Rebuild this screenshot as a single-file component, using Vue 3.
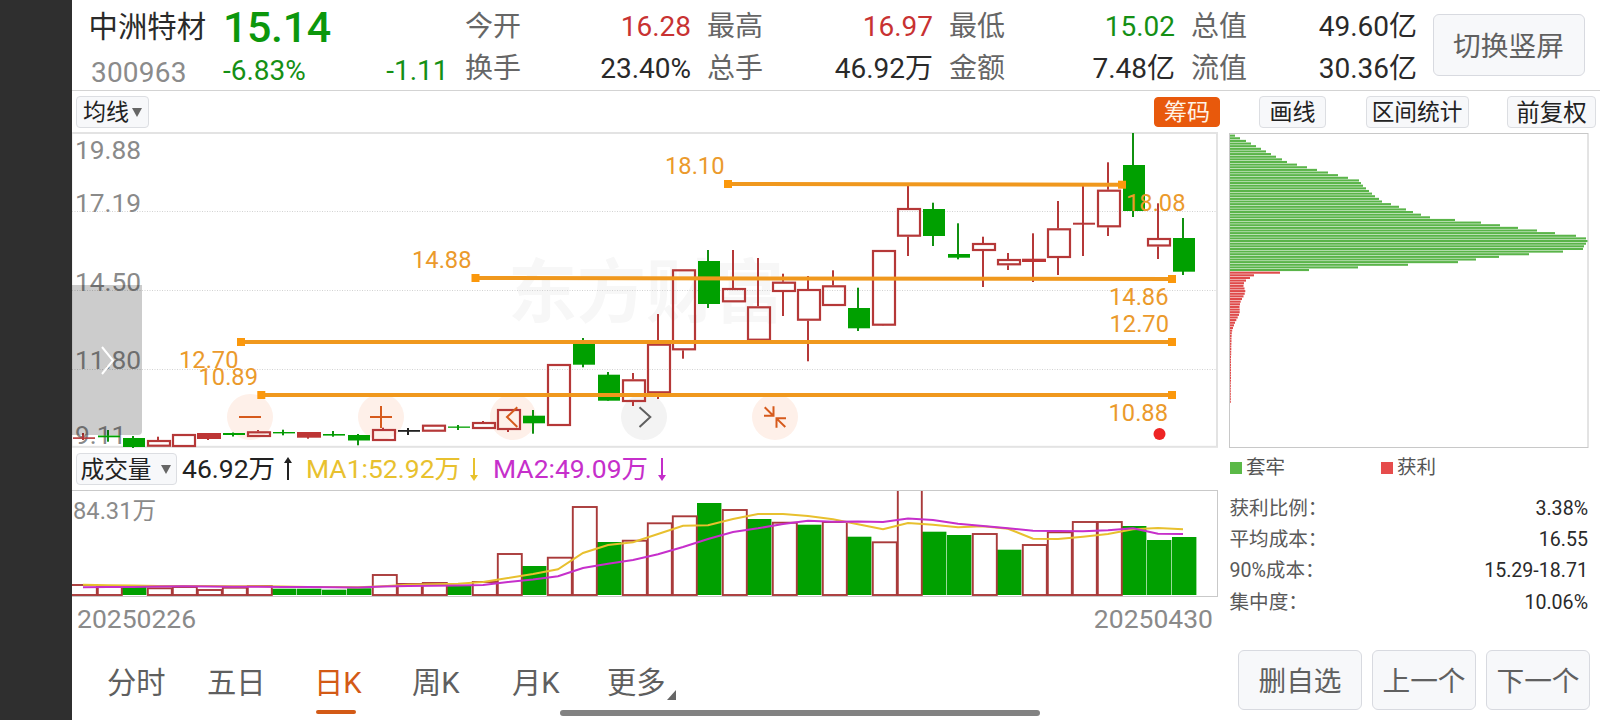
<script setup>
const quotes = [
  { label: '今开', value: '16.28', tone: 'up' },
  { label: '最高', value: '16.97', tone: 'up' },
  { label: '最低', value: '15.02', tone: 'down' },
  { label: '总值', value: '49.60亿', tone: '' },
  { label: '换手', value: '23.40%', tone: '' },
  { label: '总手', value: '46.92万', tone: '' },
  { label: '金额', value: '7.48亿', tone: '' },
  { label: '流值', value: '30.36亿', tone: '' },
]

// kind: h = hollow rise, s = solid red, t = thin red line, g = green, b = black
// [kind, body top, body bottom, high, low]
const candleRows = [
  ['t', 437.3, 438.9, 433, 440], ['g', 435.5, 437.3, 430, 441.7], ['g', 438, 447, 436, 448],
  ['h', 440, 446.7, 436.7, 446], ['h', 434, 447, 434, 446], ['s', 433, 439, 433, 440],
  ['g', 433, 435, 432.5, 436.5], ['h', 431.3, 437, 430, 437], ['g', 432, 433.4, 429.7, 435.3],
  ['s', 432, 437.7, 432, 438.7], ['g', 434, 435.6, 431, 436.7], ['g', 435, 440.5, 434, 445.3],
  ['h', 429, 441, 427.7, 441], ['b', 430, 431.8, 428, 435], ['h', 424.7, 431.7, 424.7, 431.7],
  ['g', 426.5, 427.8, 425, 430], ['h', 422, 429, 421, 429], ['h', 409, 430, 409, 432],
  ['g', 415.7, 423.3, 410, 433.7], ['h', 364, 426, 364, 426], ['g', 343, 364.7, 338, 367.3],
  ['g', 374.7, 400.7, 372, 400.7], ['h', 379.3, 402, 373, 406], ['h', 343.7, 393.3, 314, 399],
  ['h', 269.3, 350.3, 269.3, 358.7], ['g', 261, 304, 250, 308], ['h', 288, 302.3, 250, 302],
  ['h', 306.3, 340.7, 258, 340], ['h', 281.7, 292, 273.7, 316], ['h', 289, 320.7, 276, 361.3],
  ['h', 285.3, 306, 270.3, 306], ['g', 308, 328.3, 287.7, 331], ['h', 250, 325.7, 250, 326],
  ['h', 208, 236.7, 185, 256], ['g', 209, 236, 202.7, 246], ['g', 254, 257.7, 223.3, 259.3],
  ['h', 243, 251, 236.7, 287], ['h', 259, 265.3, 253, 270], ['s', 258.7, 262, 233.3, 282],
  ['h', 228.3, 258, 201, 275], ['t', 222.7, 224.7, 185, 256], ['h', 189.7, 227.3, 162.3, 236],
  ['g', 165, 211, 133, 217], ['h', 238, 246.5, 203.3, 259], ['g', 238, 271.7, 218, 275],
]
const candles = candleRows.map(([kind, top, bottom, high, low], i) => ({
  kind, top, bottom, high, low, x: 83 + i * 25,
}))

const volumeTops = [
  584, 585.5, 587, 587.3, 586, 589, 586.7, 585, 588.7, 588.7, 589.7, 588.3, 574, 583, 582,
  586, 581, 553, 566, 556.7, 506, 542, 539.7, 522.3, 515.3, 503, 509, 519, 521.7, 524.7,
  521, 536.7, 541.3, 470, 531.7, 535, 533, 549.7, 544, 531.3, 521, 521, 526, 540, 537,
]
const greenVolumes = new Set([2, 8, 9, 10, 11, 15, 18, 21, 25, 27, 29, 31, 34, 35, 37, 42, 43, 44])
const volumes = volumeTops.map((top, i) => ({ top, x: 83 + i * 25, green: greenVolumes.has(i) }))

const toPoints = (ys) => ys.map((y, i) => `${83 + i * 25},${y}`).join(' ')
const ma1 = toPoints([
  584.7, 585.3, 585.6, 586, 586, 586, 586.2, 586.3, 586.5, 587, 587, 587.3, 586.2, 584.7, 584.3,
  583.7, 582, 578, 574, 569.3, 553, 545, 542.3, 534, 525.7, 525.3, 519, 514, 514, 516,
  519.3, 524.3, 529.3, 523, 524.7, 527.3, 526.3, 528.7, 538.7, 539, 536.7, 534, 529.3, 528, 529.3,
])
const ma2 = toPoints([
  587.3, 587, 587, 586.5, 586.3, 586.5, 586.7, 586.7, 587, 587, 587.3, 587.5, 586.5, 586, 585.8,
  585.6, 585, 582, 579.5, 576.3, 568, 563.7, 560, 554.3, 547, 539, 532, 528.3, 524, 520.7,
  521.7, 521.5, 522, 518.5, 520, 523.7, 526, 528.3, 530.7, 531, 531.3, 530.3, 528.3, 533.7, 534,
])

const trapped = [
  5, 10, 16, 21, 26, 31, 36, 41, 46, 52, 57, 67, 77, 87, 98, 108, 118, 129, 131, 133, 136, 139,
  142, 145, 149, 152, 161, 169, 176, 183, 191, 200, 225, 251, 270, 288, 307, 325, 346, 356, 357.5,
  356, 354, 353, 333, 299, 269, 246, 228, 178, 128, 79,
]
const profitable = [
  50, 24, 20, 16, 14, 13.5, 14.5, 15.3, 14.7, 13.5, 12, 10.7, 10, 9.5, 9.7, 9.7, 9, 7.7, 6.3, 5,
  4, 3, 2.2, 1.8, 1.6, 1.5, 1.5, 1.4, 1.3, 1.3, 1.2, 1.2, 1, 1, 1, 1, 1, 1, 1, 1, 1, 1, 0.8,
  0.8, 0.8, 0.8, 0.8, 0.8, 0.8, 0.8,
]
const chips = [...trapped, ...profitable].map((w, i) => ({
  w, y: 134.6 + i * 2.635, color: i < trapped.length ? '#5ab449' : '#df4a4a',
}))

const trendLines = [
  { x1: 728, y1: 184, x2: 1122, y2: 184.7 },
  { x1: 475.5, y1: 278, x2: 1172, y2: 279 },
  { x1: 241, y1: 342, x2: 1172, y2: 342 },
  { x1: 261.3, y1: 395, x2: 1172, y2: 395 },
]
const trendLabels = [
  { x: 665, y: 174, t: '18.10' }, { x: 1126, y: 211, t: '18.08' },
  { x: 412, y: 268, t: '14.88' }, { x: 1109, y: 305, t: '14.86' },
  { x: 179, y: 368, t: '12.70' }, { x: 1109.5, y: 332, t: '12.70' },
  { x: 198.5, y: 385, t: '10.89' }, { x: 1108.5, y: 421, t: '10.88' },
]
const priceScale = [
  { y: 159, t: '19.88' }, { y: 212, t: '17.19' }, { y: 291, t: '14.50' },
  { y: 369, t: '11.80' }, { y: 443.7, t: '9.11' },
]
const stats = [
  ['获利比例：', '3.38%'],
  ['平均成本：', '16.55'],
  ['90%成本：', '15.29-18.71'],
  ['集中度：', '10.06%'],
]
const tabs = ['分时', '五日', '日K', '周K', '月K', '更多']
</script>

<template>
  <div class="screen">
    <aside class="notch"></aside>
    <div class="app">
      <header class="header">
        <div class="stock">
          <span class="name">中洲特材</span>
          <span class="code">300963</span>
        </div>
        <div class="price">
          <strong>15.14</strong>
          <div class="change"><span>-6.83%</span><span>-1.11</span></div>
        </div>
        <dl class="quotes">
          <div v-for="q in quotes" :key="q.label" class="quote">
            <dt>{{ q.label }}</dt>
            <dd :class="q.tone">{{ q.value }}</dd>
          </div>
        </dl>
        <button class="btn rotate">切换竖屏</button>
      </header>

      <div class="toolbar">
        <button class="chip ma">均线<i class="caret"></i></button>
        <button class="chip active">筹码</button>
        <button class="chip draw">画线</button>
        <button class="chip range">区间统计</button>
        <button class="chip adjust">前复权</button>
      </div>

      <div class="body">
        <section class="left">
          <svg class="kline" width="1147" height="316" viewBox="72 132 1147 316">
            <rect x="71.5" y="133" width="1145.5" height="313.8" fill="#fff" stroke="#e3e3e3" stroke-width="2" />
            <text class="watermark" x="508" y="317">东方财富</text>
            <g stroke="#d2d2d2" stroke-width="1" stroke-dasharray="1 1.5">
              <line x1="72" x2="1217" y1="211.5" y2="211.5" />
              <line x1="72" x2="1217" y1="290.5" y2="290.5" />
              <line x1="72" x2="1217" y1="369.5" y2="369.5" />
            </g>
            <circle v-for="x in [250, 381, 513, 775]" :key="x" :cx="x" cy="417" r="23" fill="#fef0e9" />
            <circle cx="644" cy="417" r="23" fill="#f3f3f3" />
            <text v-for="p in priceScale" :key="p.t" class="scale" x="75" :y="p.y">{{ p.t }}</text>
            <g v-for="c in candles" :key="c.x">
              <template v-if="c.kind === 'h'">
                <rect :x="c.x - 1" :y="c.high" width="2" :height="c.top - c.high" fill="#b53838" />
                <rect :x="c.x - 1" :y="c.bottom" width="2" :height="Math.max(0, c.low - c.bottom)" fill="#b53838" />
                <rect :x="c.x - 10" :y="c.top + 1" width="22" :height="c.bottom - c.top - 2" fill="none" stroke="#b53838" stroke-width="2.2" />
              </template>
              <template v-else-if="c.kind === 's'">
                <rect :x="c.x - 1" :y="c.high" width="2" :height="c.low - c.high" fill="#b53838" />
                <rect :x="c.x - 11" :y="c.top" width="24" :height="c.bottom - c.top" fill="#bd3535" />
              </template>
              <template v-else>
                <rect
                  :x="c.x - 1" :y="c.high" width="2" :height="c.low - c.high"
                  :fill="c.kind === 'g' ? '#109010' : c.kind === 'b' ? '#222' : '#b53838'"
                />
                <rect
                  :x="c.x - 10" :y="c.top" width="22" :height="c.bottom - c.top"
                  :fill="c.kind === 'g' ? '#00a000' : c.kind === 'b' ? '#222' : '#b53838'"
                />
              </template>
            </g>
            <g fill="none" stroke="#d65a1c" stroke-width="2">
              <path d="M239 417h22M370 417h22M381 406v22M517.3 407.3L507 417l10.3 10" />
              <path d="M764.7 407.3l8.6 8.4M773.5 406.3v9.4h-9.5M785.3 427l-8.6-8.4M776.5 427.7v-9.4h9.5" />
              <path d="M639.5 407.3l10.8 9.7-10.8 10" stroke="#5f5f5f" />
            </g>
            <g v-for="(l, i) in trendLines" :key="i">
              <line :x1="l.x1" :y1="l.y1" :x2="l.x2" :y2="l.y2" stroke="#f0981d" stroke-width="4" />
              <rect :x="l.x1 - 4" :y="l.y1 - 4" width="8" height="8" fill="#fb980c" />
              <rect :x="l.x2 - 4" :y="l.y2 - 4" width="8" height="8" fill="#fb980c" />
            </g>
            <text v-for="(l, i) in trendLabels" :key="i" class="trend" :x="l.x" :y="l.y">{{ l.t }}</text>
            <circle cx="1159.5" cy="434" r="6" fill="#ee2424" />
            <path d="M72 285h70v146a4 4 0 0 1-4 4H72z" fill="#000" fill-opacity=".2" />
            <path d="M102 347l11 13.5L102 374" fill="none" stroke="#fff" stroke-width="2" />
          </svg>

          <div class="indicator">
            <button class="chip vol">成交量<i class="caret"></i></button>
            <span class="v0">46.92万</span>
            <svg width="10" height="24" viewBox="0 0 10 24"><path d="M5 23V3" stroke="#222" stroke-width="2" /><path d="M5 0l4 6H1z" fill="#222" /></svg>
            <span class="v1">MA1:52.92万</span>
            <svg width="10" height="24" viewBox="0 0 10 24"><path d="M5 1v20" stroke="#e8c22e" stroke-width="2" /><path d="M5 24l4-6H1z" fill="#e8c22e" /></svg>
            <span class="v2">MA2:49.09万</span>
            <svg width="10" height="24" viewBox="0 0 10 24"><path d="M5 1v20" stroke="#c32ec9" stroke-width="2" /><path d="M5 24l4-6H1z" fill="#c32ec9" /></svg>
          </div>

          <svg class="volume" width="1147" height="108" viewBox="72 490 1147 108">
            <rect x="71.5" y="490.5" width="1146" height="106" fill="#fff" stroke="#c9c9c9" />
            <text class="vscale" x="73" y="519">84.31万</text>
            <svg x="72" y="491" width="1146" height="106" viewBox="72 491 1146 106">
              <template v-for="v in volumes" :key="v.x">
                <rect v-if="v.green" :x="v.x - 11" :y="v.top" width="24.4" :height="595 - v.top" fill="#00a000" />
              </template>
              <template v-for="v in volumes" :key="v.x">
                <rect v-if="!v.green" :x="v.x - (v.x === 83 ? 14 : 10.2)" :y="v.top + 1" :width="v.x === 83 ? 27.8 : 24" :height="594 - v.top" fill="none" stroke="#a93a3a" stroke-width="1.9" />
              </template>
              <polyline :points="ma1" fill="none" stroke="#e8c02e" stroke-width="2" />
              <polyline :points="ma2" fill="none" stroke="#c62fcb" stroke-width="2" />
            </svg>
          </svg>
          <div class="dates"><span>20250226</span><span>20250430</span></div>
        </section>

        <section class="right">
          <svg class="chips" width="361" height="316" viewBox="1229 132 361 316">
            <rect x="1229.5" y="133.5" width="358.5" height="314" fill="#fff" stroke="#c8c8c8" />
            <rect v-for="(c, i) in chips" :key="i" x="1230" :y="c.y" :width="c.w" height="2.1" :fill="c.color" />
          </svg>
          <div class="legend">
            <span class="item"><i class="sq g"></i>套牢</span>
            <span class="item"><i class="sq r"></i>获利</span>
          </div>
          <ul class="stats">
            <li v-for="s in stats" :key="s[0]"><span>{{ s[0] }}</span><b>{{ s[1] }}</b></li>
          </ul>
        </section>
      </div>

      <footer class="footer">
        <nav class="tabs">
          <a v-for="t in tabs" :key="t" :class="{ on: t === '日K', more: t === '更多' }">{{ t }}</a>
        </nav>
        <div class="actions">
          <button class="btn del">删自选</button>
          <button class="btn">上一个</button>
          <button class="btn">下一个</button>
        </div>
      </footer>
      <div class="home"></div>
    </div>
  </div>
</template>

<style>
body { margin: 0; background: #fff; }
</style>

<style scoped>
.screen {
  width: 1600px; height: 720px; display: flex; position: relative; overflow: hidden;
  background: #fff; color: #2a2a2a;
  font-family: Roboto, "Noto Sans CJK SC", sans-serif; font-weight: 400;
}
.screen * { box-sizing: border-box; }
.notch { width: 72px; background: #2f2f2f; flex: none; }
.app { flex: 1; min-width: 0; display: flex; flex-direction: column; }
button { font-family: inherit; font-weight: inherit; padding: 0; margin: 0; white-space: nowrap; }
svg { display: block; flex: none; }

.header { height: 91px; border-bottom: 1px solid #d3d3d3; display: flex; align-items: flex-start; flex: none; }
.stock { width: 151px; padding-left: 16.5px; display: flex; flex-direction: column; }
.name { font-size: 29.4px; line-height: 42px; margin-top: 6px; white-space: nowrap; }
.code { font-size: 28px; line-height: 32px; margin: 9px 0 0 2.5px; color: #8b8b8b; letter-spacing: .2px; }
.price { width: 225.5px; color: #0c970c; }
.price strong { display: block; font-weight: 500; font-size: 43px; line-height: 50px; margin-top: 2px; letter-spacing: -.4px; }
.change { display: flex; justify-content: space-between; font-size: 28px; line-height: 32px; margin-top: 3px; color: #159015; }
.quotes { display: grid; grid-template-columns: repeat(4, 242px); grid-auto-rows: 42px; margin: 6px 0 0 16.5px; }
.quote { display: flex; justify-content: space-between; padding-right: 16px; font-size: 28px; line-height: 42px; white-space: nowrap; }
.quote dt { color: #666; }
.quote dd { margin: 0; color: #2a2a2a; }
.quote dd.up { color: #c83232; }
.quote dd.down { color: #159015; }
.btn { border: 1px solid #d8dae0; border-radius: 6px; background: #f7f8fa; color: #606060; font-size: 27.7px; line-height: 40px; padding-top: 3px; }
.rotate { width: 152px; height: 62px; margin: 14px 0 0 -.5px; flex: none; }

.toolbar { height: 41px; display: flex; padding: 5px 4px 0 4px; flex: none; }
.chip {
  height: 32px; border: 1px solid #dcdee2; border-radius: 4px; background: #f7f8fa; color: #222;
  font-size: 23px; line-height: 28px; display: flex; align-items: center; justify-content: center; padding-top: 1.5px;
}
.caret { width: 0; height: 0; border: 5px solid transparent; border-top: 9px solid #666; border-bottom: 0; margin-left: 3px; }
.ma { width: 73px; }
.active { width: 66px; height: 30px; margin: 1px 0 0 1005px; background: #e8590c; border-color: #e8590c; color: #fff3e6; }
.draw { width: 67px; margin-left: 39px; }
.range { width: 103px; margin-left: 39.5px; font-size: 22.7px; }
.adjust { width: 89px; margin-left: 38.5px; font-size: 23.5px; }

.body { display: flex; height: 510px; flex: none; }
.left { width: 1157px; }
.indicator { height: 42px; display: flex; align-items: center; font-size: 26.5px; line-height: 36px; padding: 0 0 1px 4px; white-space: nowrap; }
.vol { width: 101px; font-size: 23.7px; margin-top: 1px; padding-right: 2px; }
.vol .caret { margin-left: 9px; }
.v0 { margin: 0 9px 0 5px; color: #222; width: 92px; }
.v1 { color: #e8c12f; margin-left: 13px; width: 153px; }
.v2 { color: #c62fcb; margin-left: 14px; width: 153px; }
.indicator .v1 + svg { margin-left: 10px; }
.indicator .v2 + svg { margin-left: 11px; }
.dates { display: flex; justify-content: space-between; width: 1141px; padding-left: 5px; font-size: 26.5px; line-height: 30px; margin-top: 6px; color: #8a8a8a; }
.watermark { font: 700 69px "Noto Sans CJK SC", sans-serif; fill: #f7f7f7; }
.scale { font-size: 26.3px; fill: #8a8a8a; }
.vscale { font-size: 23.7px; fill: #8a8a8a; }
.trend { font-size: 23.7px; fill: #eb9a2c; }

.right { width: 361px; }
.legend { display: flex; height: 40px; padding-left: 1px; font-size: 19.5px; line-height: 42px; color: #555; }
.item { display: flex; align-items: center; width: 151px; }
.sq { width: 12px; height: 12px; margin-right: 4px; }
.sq.g { background: #5bb947; }
.sq.r { background: #e64c4c; }
.stats { list-style: none; margin: 4.5px 0 0; padding: 0 2px 0 .5px; font-size: 19.6px; color: #5a5a5a; }
.stats li { display: flex; justify-content: space-between; height: 31.4px; line-height: 31.4px; white-space: nowrap; }
.stats b { font-weight: 400; color: #2a2a2a; }

.footer { display: flex; justify-content: space-between; height: 68px; padding: 8px 10px 0 35px; flex: none; }
.tabs { display: flex; font-size: 29.3px; line-height: 66px; color: #5f5f5f; }
.tabs a { width: 100px; position: relative; white-space: nowrap; }
.tabs .on { color: #d35a16; }
.tabs a:nth-child(2) { width: 107px; }
.tabs a:nth-child(3) { width: 98px; }
.tabs a:nth-child(5) { width: 95px; }
.tabs .on::after { content: ""; position: absolute; left: 2px; top: 60px; width: 40px; height: 4px; border-radius: 2px; background: #d35a16; }
.tabs .more::after { content: ""; position: absolute; left: 60px; top: 40px; border-left: 9px solid transparent; border-bottom: 10px solid #666; }
.actions { display: flex; gap: 10px; }
.actions .btn { width: 104px; height: 60px; }
.actions .del { width: 124px; }
.home { position: absolute; left: 560px; top: 710px; width: 480px; height: 6px; border-radius: 3px; background: #828282; }
</style>
